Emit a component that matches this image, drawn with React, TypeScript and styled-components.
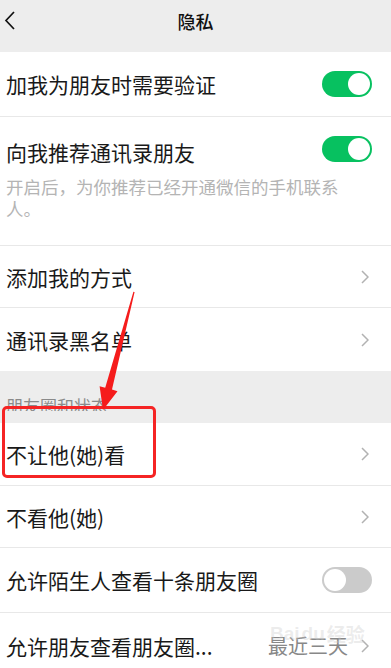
import React from "react"
import styled, { createGlobalStyle } from "styled-components"

const GlobalStyle = createGlobalStyle`
  html, body {
    margin: 0;
    padding: 0;
    background: #ededed;
    overflow: hidden;
  }
  body {
    font-family: "Noto Sans CJK SC", "Noto Sans", sans-serif;
    color: #191919;
  }
`

const Page = styled.div`
  position: relative;
  width: 391px;
  height: 668px;
  overflow: hidden;
  background: #ededed;
`

const NavBar = styled.div`
  display: flex;
  align-items: center;
  justify-content: center;
  position: relative;
  height: 42px;
`

const BackButton = styled.div`
  position: absolute;
  left: 4px;
  top: 11px;
  display: flex;
`

const NavTitle = styled.h1`
  margin: 0;
  font-size: 18px;
  font-weight: 500;
  color: #111;
`

const Group = styled.div<{ $gap?: number }>`
  background: #fff;
  margin-top: ${props => props.$gap ?? 0}px;
`

const Row = styled.div<{ $height: number; $last?: boolean }>`
  display: flex;
  align-items: center;
  height: ${props => props.$height}px;
  padding: 0 19px 0 6px;
  border-bottom: ${props => (props.$last ? "none" : "1px solid #e8e8e8")};
  box-sizing: border-box;
`

const TallRow = styled.div`
  display: flex;
  flex-direction: column;
  padding: 22px 19px 26px 6px;
  border-bottom: 1px solid #e8e8e8;
`

const TitleLine = styled.div`
  display: flex;
  align-items: center;
  height: 26px;
`

const Label = styled.span`
  flex: 1;
  font-size: 21px;
  line-height: 26px;
  color: #191919;
  white-space: nowrap;
`

const Description = styled.p`
  margin: 11px 0 0;
  max-width: 340px;
  font-size: 17.5px;
  line-height: 21.5px;
  color: #b4b4b4;
`

const Value = styled.span`
  font-size: 20px;
  color: #888;
  margin-right: 13px;
`

const Toggle = styled.div<{ $on: boolean }>`
  position: relative;
  width: 50px;
  height: 26px;
  border-radius: 13px;
  background: ${props => (props.$on ? "#07c160" : "#cbcbcb")};
  &::after {
    content: "";
    position: absolute;
    top: 2px;
    left: ${props => (props.$on ? "26px" : "2px")};
    width: 22px;
    height: 22px;
    border-radius: 50%;
    background: #fff;
  }
`

const ChevronBox = styled.div`
  display: flex;
  margin-right: 3px;
`

const SectionHeader = styled.div`
  height: 52px;
  padding: 24px 0 0 6px;
  box-sizing: border-box;
  overflow: hidden;
`

const SectionTitle = styled.div`
  height: 16px;
  overflow: hidden;
  font-size: 17px;
  line-height: 21px;
  color: #8a8a8a;
`

const Highlight = styled.div`
  position: absolute;
  left: 2px;
  top: 406px;
  width: 154px;
  height: 72px;
  border: 3px solid #f52424;
  border-radius: 5px;
  box-sizing: border-box;
  pointer-events: none;
`

const Overlay = styled.svg`
  position: absolute;
  left: 0;
  top: 0;
  pointer-events: none;
`

const Watermark = styled.div`
  position: absolute;
  left: 270px;
  top: 620px;
  display: flex;
  align-items: center;
  gap: 2px;
  font-family: "Liberation Sans", sans-serif;
  font-size: 19px;
  font-weight: bold;
  color: rgba(200, 200, 200, 0.35);
  pointer-events: none;
`

const Chevron = () => (
  <ChevronBox>
    <svg width="8" height="14" viewBox="0 0 8 14">
      <polyline points="1,1 7,7 1,13" fill="none" stroke="#b2b2b2" strokeWidth="1.5" />
    </svg>
  </ChevronBox>
)

const App: React.FC = () => {
  return (
    <Page>
      <GlobalStyle />
      <NavBar>
        <BackButton>
          <svg width="12" height="20" viewBox="0 0 12 20">
            <polyline points="10,1 2,9.5 10,18" fill="none" stroke="#111" strokeWidth="1.7" />
          </svg>
        </BackButton>
        <NavTitle>隐私</NavTitle>
      </NavBar>
      <Group $gap={10}>
        <Row $height={65}>
          <Label>加我为朋友时需要验证</Label>
          <Toggle $on />
        </Row>
        <TallRow>
          <TitleLine>
            <Label>向我推荐通讯录朋友</Label>
            <Toggle $on style={{ marginTop: -6 }} />
          </TitleLine>
          <Description>开启后，为你推荐已经开通微信的手机联系人。</Description>
        </TallRow>
        <Row $height={62}>
          <Label>添加我的方式</Label>
          <Chevron />
        </Row>
        <Row $height={63} $last>
          <Label>通讯录黑名单</Label>
          <Chevron />
        </Row>
      </Group>
      <SectionHeader>
        <SectionTitle>朋友圈和状态</SectionTitle>
      </SectionHeader>
      <Group>
        <Row $height={63}>
          <Label>不让他(她)看</Label>
          <Chevron />
        </Row>
        <Row $height={62}>
          <Label>不看他(她)</Label>
          <Chevron />
        </Row>
        <Row $height={65}>
          <Label>允许陌生人查看十条朋友圈</Label>
          <Toggle $on={false} />
        </Row>
        <Row $height={65} $last>
          <Label>允许朋友查看朋友圈...</Label>
          <Value>最近三天</Value>
          <Chevron />
        </Row>
      </Group>

      <Watermark>
        <span>Bai</span>
        <span>du</span>
        <span style={{ fontFamily: "'Noto Sans CJK SC', sans-serif" }}>经验</span>
      </Watermark>
      <Highlight />
      <Overlay width="391" height="668" viewBox="0 0 391 668">
        <polygon
          points="134.6,292 112,389.6 117.5,391.2 103,410 99.6,386.2 105.2,387.8 133.4,291.8"
          fill="#f51c1c"
        />
      </Overlay>
    </Page>
  )
}

export default App
